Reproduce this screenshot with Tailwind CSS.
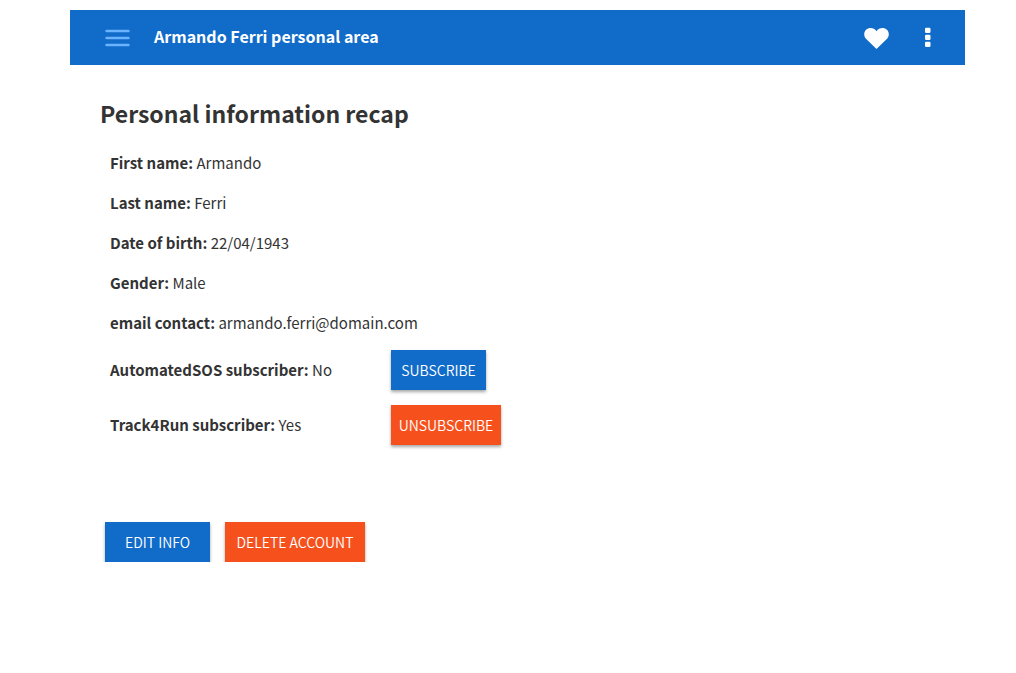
<!DOCTYPE html>
<html lang="en">
<head>
<meta charset="utf-8">
<title>Armando Ferri personal area</title>
<script src="https://cdn.jsdelivr.net/npm/@tailwindcss/browser@4"></script>
</head>
<body class="bg-white font-['Noto_Sans_CJK_SC',sans-serif] text-[15px] text-[#333333]">
<div class="ml-[70px] mr-[51px] pt-[10px]">
  <header class="flex h-[55px] items-center bg-[#116bc9] pb-[2px] pl-[35px] pr-[34px] text-white">
    <button type="button" aria-label="Open menu" class="text-[#6cb3ff]">
      <svg class="block h-5 w-[25px]" viewBox="0 0 25 20" fill="none" stroke="currentColor" stroke-width="2.400" stroke-linecap="round"><path d="M1.500 4h22M1.500 11h22M1.500 18h22"/></svg>
    </button>
    <h1 class="ml-6 grow pb-[2px] text-base leading-6 font-bold">Armando Ferri personal area</h1>
    <button type="button" aria-label="Favourites">
      <svg class="block h-6 w-[25px]" viewBox="0 0 25 24" fill="currentColor"><path d="M12.500 24 2.200 14C-.5 11.200-.3 7 1.900 4.900 5 2.100 10 2.500 12.500 6.300 15 2.500 20 2.100 23.100 4.900c2.200 2.100 2.400 6.300-.3 9.100z"/></svg>
    </button>
    <button type="button" aria-label="More options" class="ml-9">
      <svg class="block h-5 w-[6px]" viewBox="0 0 6 20" fill="currentColor"><rect width="5.500" height="5.200" y=".8" rx="1.200"/><rect y="7.800" width="5.500" height="5.200" rx="1.200"/><rect y="14.800" width="5.500" height="5.200" rx="1.200"/></svg>
    </button>
  </header>
  <main class="px-[30px] pt-[30px]">
    <h2 class="text-[23px] leading-9 font-bold">Personal information recap</h2>
    <div class="mt-3 px-[10px] leading-10">
      <p><b>First name:</b> Armando</p>
      <p><b>Last name:</b> Ferri</p>
      <p><b>Date of birth:</b> 22/04/1943</p>
      <p><b>Gender:</b> Male</p>
      <p><b>email contact:</b> armando.ferri@domain.com</p>
      <div class="mt-[7px] grid grid-cols-[281px_auto] justify-start gap-y-[15px]">
        <p><b>AutomatedSOS subscriber:</b> No</p>
        <button type="button" class="h-10 w-[95px] bg-[#116bc9] text-sm font-[350] text-white shadow-[0_2px_3px_rgba(0,0,0,0.35)]">SUBSCRIBE</button>
        <p><b>Track4Run subscriber:</b> Yes</p>
        <button type="button" class="h-10 w-[110px] bg-[#f6511d] text-sm font-[350] text-white shadow-[0_2px_3px_rgba(0,0,0,0.35)]">UNSUBSCRIBE</button>
      </div>
    </div>
    <div class="mt-[77px] flex gap-[15px] px-[5px]">
      <button type="button" class="h-10 w-[105px] bg-[#116bc9] text-sm font-[350] text-white shadow-[0_2px_3px_rgba(0,0,0,0.35)]">EDIT INFO</button>
      <button type="button" class="h-10 w-[140px] bg-[#f6511d] text-sm font-[350] text-white shadow-[0_2px_3px_rgba(0,0,0,0.35)]">DELETE ACCOUNT</button>
    </div>
  </main>
</div>
</body>
</html>
